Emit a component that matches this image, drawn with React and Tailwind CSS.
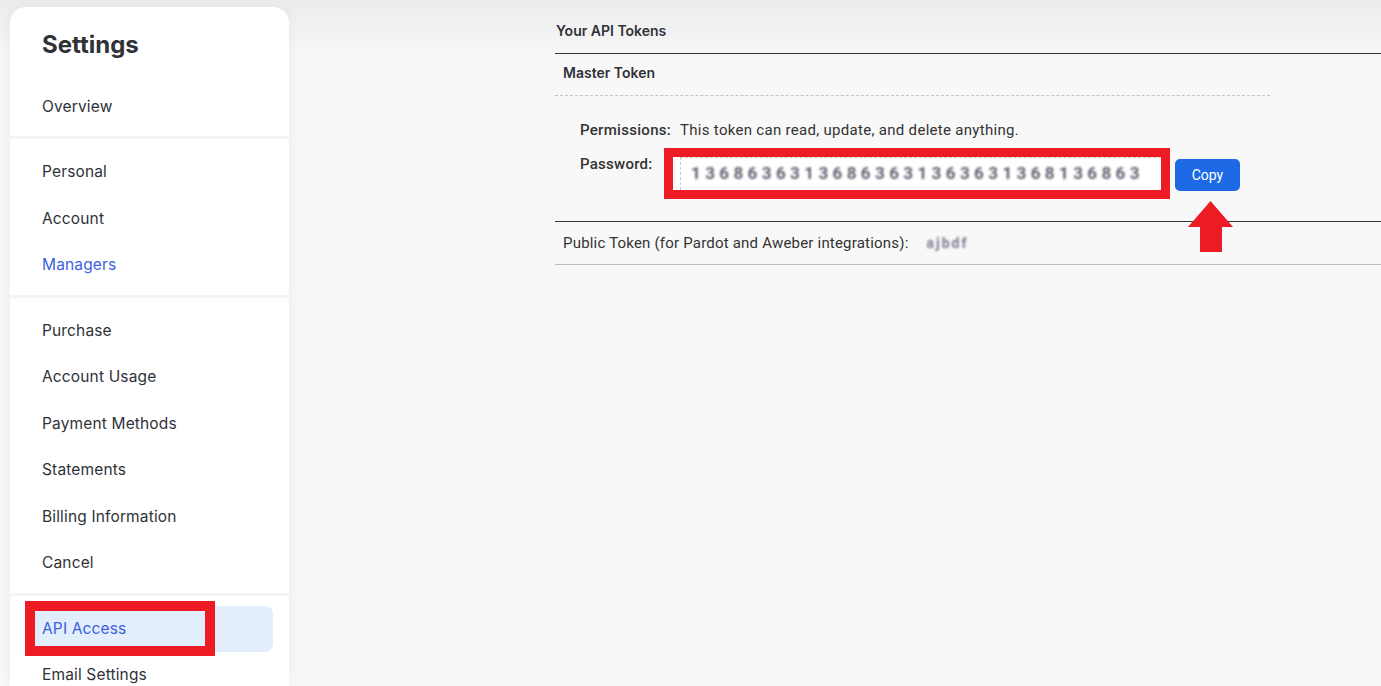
import React from "react";

const itemCls = "h-[46.5px] flex items-center pt-[3px] px-[32px] text-[15.5px] tracking-[0.15px]";

function Item({ children, blue }) {
  return (
    <div className={itemCls + (blue ? " text-[#3b5fe0]" : " text-[#2f3237]")}>{children}</div>
  );
}

export default function App() {
  return (
    <div
      className="h-[686px] w-[1381px] overflow-hidden flex bg-[linear-gradient(to_bottom,#ececec,#f8f8f8_60px)]"
      style={{ fontFamily: "Inter, 'Noto Sans', sans-serif" }}
    >
      {/* Sidebar */}
      <aside className="ml-[10px] mt-[7px] w-[279px] shrink-0 flex flex-col gap-[3px] bg-[#f4f4f4] rounded-t-[16px] shadow-[0_0_14px_rgba(0,0,0,0.05)]">
        <section className="bg-white rounded-t-[16px] pb-[7.5px]">
          <h1 className="pt-[22px] pb-[21px] px-[32px] text-[24px] leading-8 font-bold text-[#2f3237]">
            Settings
          </h1>
          <Item>Overview</Item>
        </section>
        <section className="bg-white py-[8px]">
          <Item>Personal</Item>
          <Item>Account</Item>
          <Item blue>Managers</Item>
        </section>
        <section className="bg-white py-[8px]">
          <Item>Purchase</Item>
          <Item>Account Usage</Item>
          <Item>Payment Methods</Item>
          <Item>Statements</Item>
          <Item>Billing Information</Item>
          <Item>Cancel</Item>
        </section>
        <section className="bg-white py-[8px] flex-1">
          <div className="relative h-[46.5px] mx-[16px] pt-[2px]">
            <div className="h-[46px] rounded-[8px] bg-[#e2eefb] flex items-center px-[16px] text-[15.5px] tracking-[0.15px] text-[#3b5fe0]">
              API Access
            </div>
            <div className="absolute left-[-1px] top-[-3px] w-[190px] h-[55px] border-[10px] border-[#ed1c24]" />
          </div>
          <Item>Email Settings</Item>
        </section>
      </aside>

      {/* Main */}
      <main className="ml-[266px] flex-1 pt-[21px] text-[#2f3237]">
        <h2 className="text-[14px] leading-5 font-semibold pl-[1px]">Your API Tokens</h2>
        <div className="mt-[12px] border-t border-[#333]" />
        <div className="w-[715px]">
          <h3 className="pt-[9px] pb-[12px] pl-[8px] text-[14px] leading-5 font-semibold">Master Token</h3>
          <div className="border-t border-dashed border-[#c4c4c4]" />
        </div>

        <div className="pl-[25px] pt-[24px]" style={{ fontFamily: "Roboto, 'Liberation Sans', sans-serif" }}>
          <div className="flex items-center text-[15px] tracking-[0.3px] leading-5">
            <span className="w-[100px] font-medium text-[#333]">Permissions:</span>
            <span className="text-[#333]">This token can read, update, and delete anything.</span>
          </div>
          <div className="flex items-start mt-[8px]">
            <span className="w-[84px] pt-[6px] text-[15px] tracking-[0.25px] leading-5 font-medium text-[#333]">Password:</span>
            <div className="w-[506px] h-[51px] border-[9px] border-[#ed1c24] bg-white pl-[7px]">
              <div className="h-full border-t border-l border-dashed border-[#c8c8c8] flex items-center pl-[10px] overflow-hidden">
                <span className="text-[17px] font-bold tracking-[4.4px] text-[#5f6070] blur-[0.9px] whitespace-nowrap">
                  13686363136863631363631368136863
                </span>
              </div>
            </div>
            <div className="relative ml-[5px] mt-[11px]">
              <button className="w-[65px] h-[32px] rounded-[5px] bg-[#1e6ae6] text-white text-[14px] flex items-center justify-center">
                Copy
              </button>
              <svg className="absolute left-[13px] top-[42px]" width="45" height="51" viewBox="0 0 45 51">
                <polygon points="22.5,0 45,26 34,26 34,51 12,51 12,26 0,26" fill="#ed1c24" />
              </svg>
            </div>
          </div>
        </div>

        <div className="mt-[22px] border-t border-[#333]" />
        <div
          className="h-[42px] flex items-center pl-[8px] text-[15px] tracking-[0.2px] text-[#333]"
          style={{ fontFamily: "Roboto, 'Liberation Sans', sans-serif" }}
        >
          <span>Public Token (for Pardot and Aweber integrations):</span>
          <span className="ml-[18px] text-[14px] font-bold text-[#7a7a90] blur-[0.8px] tracking-[2px]">ajbdf</span>
        </div>
        <div className="border-t border-[#bdbdbd]" />
      </main>
    </div>
  );
}
